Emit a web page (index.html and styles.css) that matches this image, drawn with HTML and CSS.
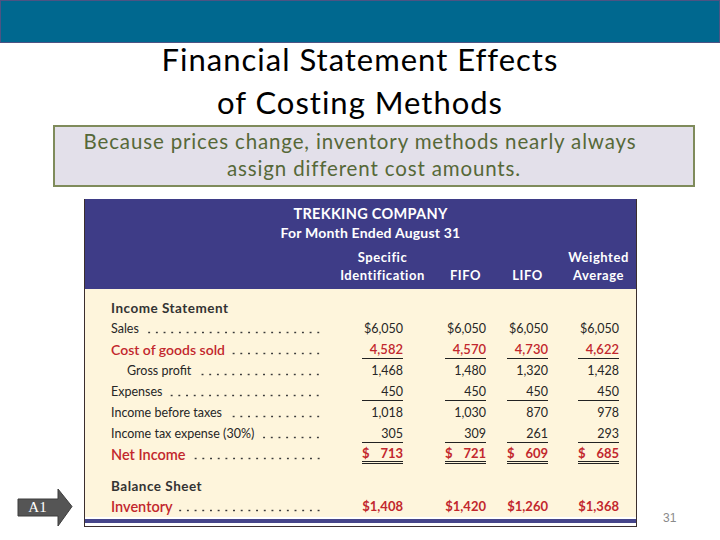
FILE: index.html
```html
<!DOCTYPE html>
<html lang="en">
<head>
<meta charset="utf-8">
<title>Financial Statement Effects of Costing Methods</title>
<link rel="stylesheet" href="styles.css">
</head>
<body>
  <div class="topbar"></div>
  <h1 class="title">
    <span class="title-line">Financial Statement Effects</span>
    <span class="title-line">of Costing Methods</span>
  </h1>
  <div class="note">
    <span class="note-line first">Because prices change, inventory methods nearly always</span>
    <span class="note-line">assign different cost amounts.</span>
  </div>
  <div class="stage">
    <div class="objective">
      <svg class="objective-arrow" width="56" height="37" viewBox="0 0 56 37">
        <polygon points="1,10 41,10 41,0 55,17.5 41,37 41,27 1,27" fill="#555555" stroke="#3d3d3d" stroke-width="1"/>
      </svg>
      <span class="objective-label">A1</span>
    </div>
    <div class="statement">
      <div class="st-head">
        <div class="st-company">TREKKING COMPANY</div>
        <div class="st-period">For Month Ended August 31</div>
        <div class="grid st-cols">
          <div class="label"></div>
          <div class="c"><div class="hcell"><span>Specific</span><span>Identification</span></div></div>
          <div class="c"><div class="hcell"><span>FIFO</span></div></div>
          <div class="c"><div class="hcell"><span>LIFO</span></div></div>
          <div class="c"><div class="hcell"><span>Weighted</span><span>Average</span></div></div>
        </div>
      </div>
      <div class="st-body">
        <div class="grid row"><div class="label heading">Income Statement</div></div>
        <div class="grid row">
          <div class="label"><span>Sales</span><span class="dots"></span></div>
          <div class="c"><span class="num">$6,050</span></div>
          <div class="c"><span class="num">$6,050</span></div>
          <div class="c"><span class="num">$6,050</span></div>
          <div class="c"><span class="num">$6,050</span></div>
        </div>
        <div class="grid row red">
          <div class="label strong"><span>Cost of goods sold</span><span class="dots"></span></div>
          <div class="c"><span class="num under strong">4,582</span></div>
          <div class="c"><span class="num under strong">4,570</span></div>
          <div class="c"><span class="num under strong">4,730</span></div>
          <div class="c"><span class="num under strong">4,622</span></div>
        </div>
        <div class="grid row">
          <div class="label indent"><span>Gross profit</span><span class="dots"></span></div>
          <div class="c"><span class="num">1,468</span></div>
          <div class="c"><span class="num">1,480</span></div>
          <div class="c"><span class="num">1,320</span></div>
          <div class="c"><span class="num">1,428</span></div>
        </div>
        <div class="grid row">
          <div class="label"><span>Expenses</span><span class="dots"></span></div>
          <div class="c"><span class="num under">450</span></div>
          <div class="c"><span class="num under">450</span></div>
          <div class="c"><span class="num under">450</span></div>
          <div class="c"><span class="num under">450</span></div>
        </div>
        <div class="grid row">
          <div class="label"><span>Income before taxes</span><span class="dots"></span></div>
          <div class="c"><span class="num">1,018</span></div>
          <div class="c"><span class="num">1,030</span></div>
          <div class="c"><span class="num">870</span></div>
          <div class="c"><span class="num">978</span></div>
        </div>
        <div class="grid row">
          <div class="label"><span>Income tax expense (30%)</span><span class="dots"></span></div>
          <div class="c"><span class="num under">305</span></div>
          <div class="c"><span class="num under">309</span></div>
          <div class="c"><span class="num under">261</span></div>
          <div class="c"><span class="num under">293</span></div>
        </div>
        <div class="grid row red">
          <div class="label big"><span>Net Income</span><span class="dots"></span></div>
          <div class="c"><span class="num double bold"><span>$</span><span>713</span></span></div>
          <div class="c"><span class="num double bold"><span>$</span><span>721</span></span></div>
          <div class="c"><span class="num double bold"><span>$</span><span>609</span></span></div>
          <div class="c"><span class="num double bold"><span>$</span><span>685</span></span></div>
        </div>
        <div class="grid row section"><div class="label heading">Balance Sheet</div></div>
        <div class="grid row red">
          <div class="label big"><span>Inventory</span><span class="dots"></span></div>
          <div class="c"><span class="num bold">$1,408</span></div>
          <div class="c"><span class="num bold">$1,420</span></div>
          <div class="c"><span class="num bold">$1,260</span></div>
          <div class="c"><span class="num bold">$1,368</span></div>
        </div>
      </div>
      <div class="st-bar"></div>
    </div>
    <div class="pagenum">31</div>
  </div>
</body>
</html>
```

FILE: styles.css
```css
html, body {
  margin: 0;
  padding: 0;
  background: #ffffff;
}
body {
  width: 720px;
  height: 540px;
  overflow: hidden;
  font-family: Lato, "Liberation Sans", sans-serif;
}
.topbar {
  height: 41px;
  background: #00688f;
  border: 1px solid #4d5383;
}
.title {
  margin: 0;
  display: flex;
  flex-direction: column;
  align-items: center;
  gap: 11px;
  font-family: Lato, "Liberation Sans", sans-serif;
  font-weight: 400;
  font-size: 31px;
  letter-spacing: 1px;
  color: #000000;
}
.title-line {
  display: block;
  line-height: 32px;
}
.note {
  margin: 7px 0 0 53px;
  width: 642px;
  height: 62px;
  box-sizing: border-box;
  border: 2px solid #7f8b5b;
  background: #e3e0ea;
  color: #566838;
  font-size: 20.5px;
  letter-spacing: 0.85px;
  display: flex;
  flex-direction: column;
  align-items: center;
  padding-top: 1px;
}
.note-line {
  display: block;
  line-height: 27px;
}
.note-line.first {
  margin-right: 28px;
}
.stage {
  margin-top: 12px;
  display: flex;
  align-items: flex-end;
}
.objective {
  margin-left: 17px;
  margin-bottom: 1px;
  width: 56px;
  height: 37px;
  display: grid;
}
.objective-arrow,
.objective-label {
  grid-area: 1 / 1;
}
.objective-label {
  width: 41px;
  align-self: center;
  text-align: center;
  font-family: "Liberation Serif", serif;
  font-size: 15px;
  color: #ffffff;
  line-height: 17px;
}
.statement {
  margin-left: 11px;
  width: 553px;
  box-sizing: border-box;
  border-left: 1px solid #3b2e2e;
  border-right: 1px solid #3b2e2e;
  border-bottom: 1px solid #3b2e2e;
  display: flex;
  flex-direction: column;
}
.st-head {
  background: #3e3c87;
  color: #ffffff;
  font-weight: 700;
  padding: 5px 0 5px;
  display: flex;
  flex-direction: column;
}
.st-company {
  font-size: 14.5px;
  line-height: 19px;
  text-align: center;
  padding-left: 20px;
  letter-spacing: 0.3px;
}
.st-period {
  font-size: 14px;
  line-height: 19px;
  text-align: center;
  padding-left: 20px;
  letter-spacing: 0.2px;
}
.grid {
  display: grid;
  grid-template-columns: 211px 81px 83px 62px 71px;
  padding-left: 26px;
}
.st-cols {
  margin-top: 6px;
  font-size: 13px;
  letter-spacing: 0.55px;
}
.c {
  display: flex;
  justify-content: flex-end;
}
.hcell {
  width: 41px;
  height: 36px;
  display: flex;
  flex-direction: column;
  justify-content: flex-end;
  align-items: center;
  white-space: nowrap;
  line-height: 18px;
}
.st-body {
  background: #fef5dc;
  padding: 8px 0 0;
  color: #262626;
  font-size: 12.5px;
}
.row {
  height: 21px;
  align-items: center;
}
.row.section {
  margin-top: 10px;
}
.label {
  display: flex;
  align-items: center;
  height: 21px;
  white-space: nowrap;
}
.label.heading {
  font-weight: 700;
  font-size: 13.5px;
  letter-spacing: 0.5px;
  color: #333333;
}
.label.indent {
  padding-left: 16px;
}
.label.strong {
  font-size: 14px;
  font-weight: 600;
}
.label.big {
  font-size: 14.5px;
  font-weight: 600;
}
.dots {
  flex: 1;
  align-self: stretch;
  margin-left: 5px;
  background-image: radial-gradient(circle, #3a3a3a 0.8px, rgba(0,0,0,0) 1.2px);
  background-size: 7.7px 3px;
  background-repeat: repeat-x;
  background-position: right 0 top 13px;
}
.red {
  color: #c2272d;
}
.num {
  width: 41px;
  display: flex;
  justify-content: flex-end;
  line-height: 17px;
  font-size: 12.5px;
  border-bottom: 1px solid transparent;
  white-space: nowrap;
}
.num.under {
  border-bottom: 1px solid #222222;
}
.num.double {
  justify-content: space-between;
  border-bottom: 3px double #222222;
  line-height: 15px;
}
.num.strong {
  font-weight: 600;
  font-size: 13px;
}
.num.bold {
  font-weight: 700;
  font-size: 13px;
}
.st-bar {
  height: 4px;
  margin-top: 2px;
  background: #46458a;
  border-bottom: 3px solid #ffffff;
}
.pagenum {
  margin-left: 26px;
  margin-bottom: 2px;
  font-family: "Liberation Sans", sans-serif;
  font-size: 12px;
  color: #8a8a8a;
  line-height: 14px;
}
```
